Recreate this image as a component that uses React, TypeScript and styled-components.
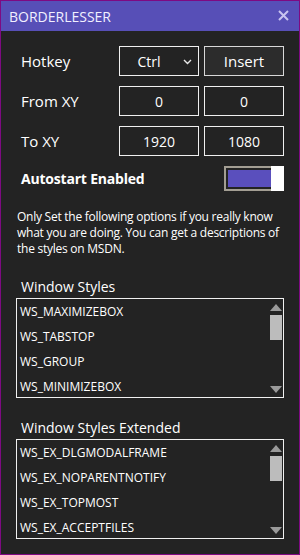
import React from 'react';
import styled, { createGlobalStyle } from 'styled-components';

const GlobalStyle = createGlobalStyle`
  html, body {
    margin: 0;
    padding: 0;
    background: #232323;
  }
  * {
    box-sizing: border-box;
  }
`;

const FONT = `"Open Sans", "Noto Sans", sans-serif`;

const windowStyles = ['WS_MAXIMIZEBOX', 'WS_TABSTOP', 'WS_GROUP', 'WS_MINIMIZEBOX'];
const windowStylesEx = ['WS_EX_DLGMODALFRAME', 'WS_EX_NOPARENTNOTIFY', 'WS_EX_TOPMOST', 'WS_EX_ACCEPTFILES'];

const App = () => {
  return (
    <>
      <GlobalStyle />
      <Window>
        <TitleBar>
          <Title>BORDERLESSER</Title>
          <CloseButton aria-label="close">
            <svg width="11" height="11" viewBox="0 0 11 11">
              <path d="M1 1 L10 10 M10 1 L1 10" stroke="#c9c4ef" strokeWidth="2" />
            </svg>
          </CloseButton>
        </TitleBar>

        <Body>
          <FormRow>
            <Label>Hotkey</Label>
            <Select>
              <span>Ctrl</span>
              <Chevron width="9" height="6" viewBox="0 0 9 6">
                <path d="M1 1 L4.5 4.5 L8 1" stroke="#e8e8e8" strokeWidth="1.4" fill="none" />
              </Chevron>
            </Select>
            <Button>Insert</Button>
          </FormRow>

          <FormRow>
            <Label>From XY</Label>
            <Field>0</Field>
            <Field>0</Field>
          </FormRow>

          <FormRow>
            <Label>To XY</Label>
            <Field>1920</Field>
            <Field>1080</Field>
          </FormRow>

          <ToggleRow>
            <BoldLabel>Autostart Enabled</BoldLabel>
            <Toggle>
              <ToggleTrack />
              <ToggleThumb />
            </Toggle>
          </ToggleRow>

          <Note>
            Only Set the following options if you really know what you are doing. You can get a descriptions of
            the styles on MSDN.
          </Note>

          <Section>
            <SectionTitle>Window Styles</SectionTitle>
            <ListBox>
              <Items>
                {windowStyles.map((s) => (
                  <Item key={s}>{s}</Item>
                ))}
              </Items>
              <ScrollBar />
            </ListBox>
          </Section>

          <Section>
            <SectionTitle>Window Styles Extended</SectionTitle>
            <ListBox>
              <Items>
                {windowStylesEx.map((s) => (
                  <Item key={s}>{s}</Item>
                ))}
              </Items>
              <ScrollBar />
            </ListBox>
          </Section>
        </Body>
      </Window>
    </>
  );
};

const ScrollBar = () => (
  <Scroll>
    <svg width="12" height="7" viewBox="0 0 12 7">
      <path d="M6 0 L12 7 L0 7 Z" fill="#9a9a9a" />
    </svg>
    <Thumb />
    <Spacer />
    <svg width="12" height="7" viewBox="0 0 12 7">
      <path d="M0 0 L12 0 L6 7 Z" fill="#9a9a9a" />
    </svg>
  </Scroll>
);

export default App;

const Window = styled.div`
  width: 300px;
  height: 555px;
  border: 1px solid #7e0a82;
  background: #232323;
  display: flex;
  flex-direction: column;
  font-family: ${FONT};
  color: #ffffff;
  overflow: hidden;
`;

const TitleBar = styled.div`
  height: 30px;
  flex: none;
  background: #574fb7;
  display: flex;
  align-items: center;
  justify-content: space-between;
  padding: 0 10px 0 8px;
`;

const Title = styled.div`
  font-size: 14px;
  color: #f2f0ff;
`;

const CloseButton = styled.div`
  width: 11px;
  height: 11px;
  display: flex;
  margin-top: -1px;
`;

const Body = styled.div`
  flex: 1;
  display: flex;
  flex-direction: column;
  padding: 15px 15px 0 15px;
`;

const FormRow = styled.div`
  display: grid;
  grid-template-columns: 1fr 80px 80px;
  column-gap: 5px;
  height: 30px;
  align-items: center;
  margin-bottom: 10px;
`;

const Label = styled.div`
  font-size: 15px;
  padding-left: 5px;
  color: #ffffff;
`;

const BoldLabel = styled(Label)`
  font-weight: 700;
  font-size: 14px;
  letter-spacing: -0.2px;
`;

const Field = styled.div`
  height: 30px;
  border: 1px solid #f0f0f0;
  display: flex;
  align-items: center;
  justify-content: center;
  font-size: 14px;
  color: #ffffff;
`;

const Select = styled(Field)`
  position: relative;
  padding-right: 20px;
`;

const Chevron = styled.svg`
  position: absolute;
  right: 6px;
  top: 12px;
`;

const Button = styled(Field)`
  background: #2c2c2c;
  border-color: #d8d8d8;
  font-size: 15px;
`;

const ToggleRow = styled.div`
  display: flex;
  align-items: center;
  justify-content: space-between;
  height: 25px;
`;

const Toggle = styled.div`
  width: 60px;
  height: 25px;
  display: flex;
`;

const ToggleTrack = styled.div`
  flex: 1;
  border: 2px solid #a39e93;
  border-right: none;
  padding: 2px 0 2px 2px;
  background: #232323;
  &::after {
    content: '';
    display: block;
    height: 100%;
    background: #5a4fbd;
  }
`;

const ToggleThumb = styled.div`
  width: 13px;
  height: 25px;
  background: #ffffff;
`;

const Note = styled.p`
  margin: 18px 0 0 1px;
  font-size: 12px;
  line-height: 16px;
  letter-spacing: -0.25px;
  color: #ffffff;
`;

const Section = styled.div`
  display: flex;
  flex-direction: column;
  margin-top: 18px;
`;

const SectionTitle = styled.div`
  font-size: 14px;
  line-height: 23px;
  padding-left: 5px;
  color: #ffffff;
`;

const ListBox = styled.div`
  height: 100px;
  border: 1px solid #f0f0f0;
  display: flex;
  padding-left: 3px;
  overflow: hidden;
`;

const Items = styled.div`
  flex: 1;
  display: flex;
  flex-direction: column;
`;

const Item = styled.div`
  flex: none;
  height: 25px;
  display: flex;
  align-items: center;
  font-size: 12px;
  color: #ffffff;
`;

const Scroll = styled.div`
  width: 12px;
  margin-right: 1px;
  display: flex;
  flex-direction: column;
  align-items: center;
  padding: 5px 0 4px;
  gap: 4px;
`;

const Thumb = styled.div`
  width: 12px;
  height: 25px;
  background: #bcbcbc;
`;

const Spacer = styled.div`
  flex: 1;
`;
